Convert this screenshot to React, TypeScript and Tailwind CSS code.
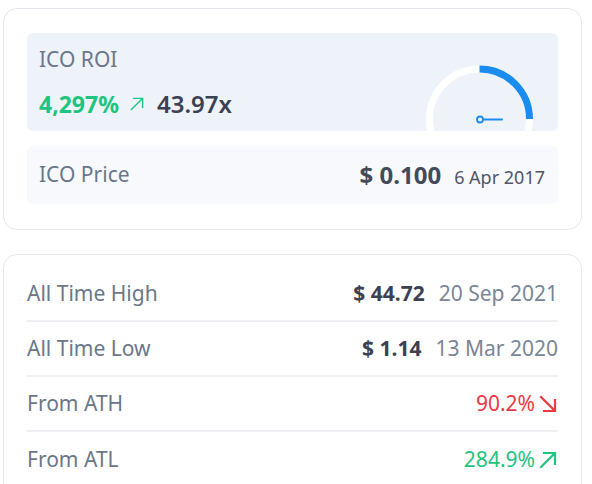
import React from 'react';

const font = { fontFamily: '"Noto Sans", "Open Sans", sans-serif' };

const UpRight: React.FC<{ size: number; color: string; w?: number }> = ({ size, color, w = 2 }) => (
  <svg width={size} height={size} viewBox="0 0 20 20" fill="none" stroke={color} strokeWidth={w} strokeLinecap="square">
    <path d="M3 17 L16.5 3.5" />
    <path d="M6 3 H17 V14" />
  </svg>
);

const DownRight: React.FC<{ size: number; color: string; w?: number }> = ({ size, color, w = 2 }) => (
  <svg width={size} height={size} viewBox="0 0 20 20" fill="none" stroke={color} strokeWidth={w} strokeLinecap="square">
    <path d="M3 3 L16.5 16.5" />
    <path d="M6 17 H17 V6" />
  </svg>
);

const Gauge: React.FC = () => (
  <svg width="120" height="72" viewBox="0 0 120 72" className="absolute right-[19px] bottom-0">
    {/* background ring, clipped by the box bottom */}
    <circle cx="60.5" cy="60" r="50" fill="none" stroke="#ffffff" strokeWidth="7" />
    <path d="M60.5 10 A50 50 0 0 1 110.5 60" fill="none" stroke="#1a8cf0" strokeWidth="7" />
    <line x1="63.5" y1="60.5" x2="83" y2="60.5" stroke="#1a8cf0" strokeWidth="2" strokeLinecap="round" />
    <circle cx="61" cy="60.5" r="3" fill="#eef3fa" stroke="#1a8cf0" strokeWidth="1.8" />
  </svg>
);

const Row: React.FC<{ label: string; children: React.ReactNode; last?: boolean }> = ({ label, children, last }) => (
  <div className={`flex items-center justify-between h-[55px] ${last ? '' : 'border-b-2 border-[#eef0f3]'}`}>
    <span className="text-[21px] text-[#6b7789]">{label}</span>
    <div className="flex items-center">{children}</div>
  </div>
);

export default function App() {
  return (
    <div className="w-[592px] h-[484px] bg-white overflow-hidden" style={font}>
      <div className="pl-[3px] pr-[10px] pt-[8px]">
        {/* ICO card */}
        <div className="border border-[#e4e7eb] rounded-[14px] px-[23px] pt-[24px] pb-[25px]">
          <div className="relative h-[98px] bg-[#eef3fa] rounded-[6px] overflow-hidden px-[12px] pt-[13px]">
            <div className="text-[21px] text-[#6b7789] leading-[26px]">ICO ROI</div>
            <div className="flex items-center mt-[16px] leading-[32px]">
              <span className="text-[23px] font-bold text-[#1ec47f]">4,297%</span>
              <span className="ml-[10px] mr-[12px]">
                <UpRight size={16} color="#1ec47f" w={1.8} />
              </span>
              <span className="text-[24px] font-semibold text-[#3b4152]">43.97x</span>
            </div>
            <Gauge />
          </div>
          <div className="mt-[15px] h-[58px] bg-[#f7f9fc] rounded-[6px] flex items-center justify-between pl-[12px] pr-[13px]">
            <span className="text-[21px] text-[#6b7789]">ICO Price</span>
            <div className="flex items-baseline">
              <span className="text-[24px] font-bold text-[#434a5a]">$ 0.100</span>
              <span className="text-[18px] text-[#4f5666] ml-[13px]">6 Apr 2017</span>
            </div>
          </div>
        </div>

        {/* Stats card */}
        <div className="mt-[24px] border border-[#e4e7eb] rounded-[14px] px-[23px] pt-[12px] h-[260px]">
          <Row label="All Time High">
            <span className="text-[21px] font-bold text-[#3b4152]">$ 44.72</span>
            <span className="text-[21px] text-[#7a8596] ml-[14px]">20 Sep 2021</span>
          </Row>
          <Row label="All Time Low">
            <span className="text-[21px] font-bold text-[#3b4152]">$ 1.14</span>
            <span className="text-[21px] text-[#7a8596] ml-[14px]">13 Mar 2020</span>
          </Row>
          <Row label="From ATH">
            <span className="text-[21px] text-[#ea3943]">90.2%</span>
            <span className="ml-[3px]">
              <DownRight size={20} color="#ea3943" w={2.2} />
            </span>
          </Row>
          <Row label="From ATL" last>
            <span className="text-[21px] text-[#1ec47f]">284.9%</span>
            <span className="ml-[3px]">
              <UpRight size={20} color="#1ec47f" w={2.2} />
            </span>
          </Row>
        </div>
      </div>
    </div>
  );
}
